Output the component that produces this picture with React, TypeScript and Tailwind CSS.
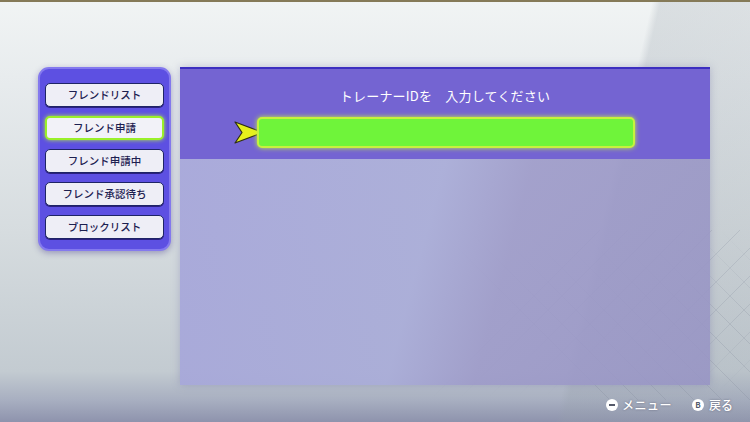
import React from 'react';

const menuItems = ['フレンドリスト', 'フレンド申請', 'フレンド申請中', 'フレンド承認待ち', 'ブロックリスト'];

function MenuButton({ label, active }: { label: string; active?: boolean }) {
  return (
    <div
      className={`h-[24px] rounded-[5px] flex items-center justify-center text-[10.5px] font-medium text-[#1c2050] ${
        active
          ? 'bg-[#f2f2f8] border-2 border-[#9af02a] shadow-[0_0_4px_#b8f040]'
          : 'bg-[#eeeef6] border border-[#1e2466] shadow-[0_1px_0_#2a2080]'
      }`}
    >
      {label}
    </div>
  );
}

function Lattice() {
  // faint triangular grid in the lower right of the background
  const lines = [];
  for (let i = 0; i < 12; i++) {
    const x = 520 + i * 28;
    lines.push(<line key={'v' + i} x1={x} y1={230} x2={x} y2={400} />);
    lines.push(<line key={'d' + i} x1={x - 90} y1={400} x2={x + 80} y2={230} />);
    lines.push(<line key={'e' + i} x1={x - 80} y1={230} x2={x + 90} y2={400} />);
  }
  for (let j = 0; j < 7; j++) {
    const y = 240 + j * 28;
    lines.push(<line key={'h' + j} x1={520} y1={y} x2={750} y2={y} />);
  }
  return (
    <svg className="absolute inset-0 pointer-events-none" width="750" height="422">
      <defs>
        <linearGradient id="fade" x1="0" y1="0" x2="1" y2="0">
          <stop offset="0" stopColor="#7a8294" stopOpacity="0" />
          <stop offset="0.5" stopColor="#7a8294" stopOpacity="0.22" />
          <stop offset="1" stopColor="#7a8294" stopOpacity="0.22" />
        </linearGradient>
      </defs>
      <g stroke="url(#fade)" strokeWidth="1">{lines}</g>
    </svg>
  );
}

export default function App() {
  return (
    <div
      className="relative w-[750px] h-[422px] overflow-hidden bg-[linear-gradient(180deg,#f1f4f4_0%,#e8ecee_18%,#d6dcdf_55%,#c3cbd1_88%,#a7aec0_95%,#8e93ad_100%)]"
      style={{ fontFamily: '"Noto Sans CJK JP", "Noto Sans", sans-serif' }}
    >
      <div className="absolute inset-0 bg-[linear-gradient(103deg,transparent_0%,transparent_77%,rgba(150,160,170,0.25)_78%,rgba(150,160,170,0.2)_100%)]" />
      <Lattice />

      <div className="relative flex flex-col h-full">
        <div className="h-[2px] bg-[#857a58]" />
        <div className="flex gap-[9px] pl-[38px] pt-[65px]">
          {/* left menu */}
          <div className="w-[133px] h-[184px] rounded-[11px] bg-[#5d50e2] border-[2px] border-[#8479ee] shadow-[0_2px_6px_rgba(40,30,120,0.35)] px-[5px] pt-[14px] flex flex-col gap-[9px]">
            {menuItems.map((m) => (
              <MenuButton key={m} label={m} active={m === 'フレンド申請'} />
            ))}
          </div>

          {/* main panel */}
          <div className="w-[530px] h-[318px] flex flex-col shadow-[0_0_8px_rgba(120,120,170,0.4)]">
            <div className="h-[92px] bg-[#7464d2] border-t-2 border-[#3c2ec0] flex flex-col items-center pt-[17px]">
              <div className="text-[13px] text-white tracking-[0.2px]">トレーナーIDを　入力してください</div>
              <div className="flex items-center mt-[11px] ml-[-22px]">
                <svg width="28" height="30" viewBox="0 0 28 30" className="mr-[-4px]">
                  <path
                    d="M2 5 L26 14 L26 17 L2 26 L9 15.5 Z"
                    fill="#e6f01c"
                    stroke="#2e2e14"
                    strokeWidth="1.2"
                    strokeLinejoin="round"
                  />
                </svg>
                <div className="w-[378px] h-[31px] rounded-[5px] bg-[#6ff43a] border-2 border-[#c6f23e] shadow-[0_0_5px_#c8f040]" />
              </div>
            </div>
            <div className="flex-1 bg-[linear-gradient(105deg,rgba(166,166,218,0.93)_0%,rgba(169,172,216,0.93)_45%,rgba(157,154,201,0.9)_60%,rgba(151,148,196,0.88)_100%)]" />
          </div>
        </div>

        {/* footer */}
        <div className="flex justify-end items-center gap-[20px] pr-[17px] mt-[11px] text-[12px] font-medium text-white">
          <div className="flex items-center gap-[4px]">
            <span className="w-[12px] h-[12px] rounded-full bg-white flex items-center justify-center">
              <span className="w-[6px] h-[2px] bg-[#555a6a]" />
            </span>
            <span className="[text-shadow:0_0_2px_rgba(60,60,80,0.6)] tracking-[0.5px]">メニュー</span>
          </div>
          <div className="flex items-center gap-[5px]">
            <span className="w-[12px] h-[12px] rounded-full bg-white flex items-center justify-center text-[8px] font-bold text-[#555a6a] leading-none">B</span>
            <span className="[text-shadow:0_0_2px_rgba(60,60,80,0.6)]">戻る</span>
          </div>
        </div>
      </div>
    </div>
  );
}
